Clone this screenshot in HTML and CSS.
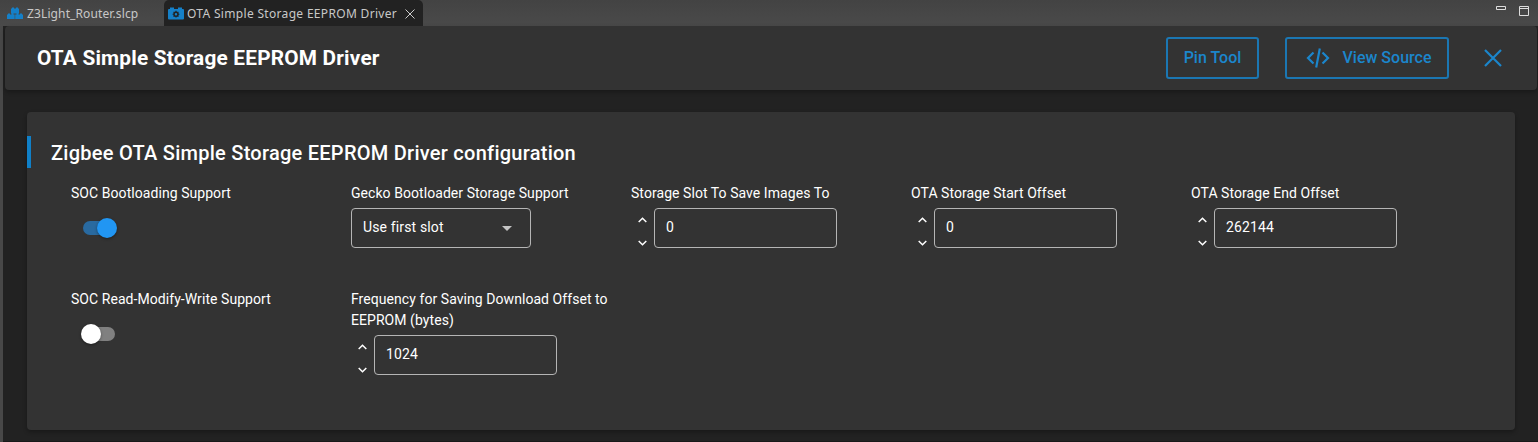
FILE: index.html
```html
<!DOCTYPE html>
<html lang="en">
<head>
<meta charset="utf-8">
<title>OTA Simple Storage EEPROM Driver</title>
<link rel="stylesheet" href="styles.css">
</head>
<body>
<nav class="tabs">
  <div class="tab tab-first">
    <svg class="tab-icon" width="16" height="13" viewBox="0 0 16 13" fill="#1580c8"><path d="M4 1.500h1V.5h2v1h2v-1h2v1h1v5H4zM0 7.500h1v-1h2v1h1.500v-1h2v1h1.200V12H0zM8.200 7.500h1.300v-1h2v1H13v-1h2v1h1V12H8.200z"/></svg>
    <span class="tab-name">Z3Light_Router.slcp</span>
  </div>
  <div class="tab tab-active">
    <svg class="tab-icon" width="16" height="13" viewBox="0 0 16 13"><path fill="#1580c8" d="M1 2h1V.5h4V2h4V.5h4V2h1q1 0 1 1v8.500q0 1-1 1H1q-1 0-1-1V3q0-1 1-1z"/><circle cx="8" cy="7.200" r="2" fill="none" stroke="#222" stroke-width="1.500"/><path stroke="#222" stroke-width="1.100" d="M8 3.800v1.200M8 9.400v1.200M4.600 7.200h1.200M10.200 7.200h1.200M5.600 4.800l.8.8M9.600 8.800l.8.8M10.400 4.800l-.8.8M6.400 8.800l-.8.8"/></svg>
    <span class="tab-name">OTA Simple Storage EEPROM Driver</span>
    <svg class="tab-close" width="10" height="10" viewBox="0 0 10 10" fill="none" stroke="#ccc" stroke-width="1"><path d="M.5.5l9 9M9.500.5l-9 9"/></svg>
  </div>
  <div class="window-tools">
    <svg width="10" height="4" viewBox="0 0 10 4" fill="none" stroke="#ddd"><path d="M.5.5h9v3h-9z"/></svg>
    <svg width="10" height="10" viewBox="0 0 10 10" fill="none" stroke="#ddd"><path d="M.5.5h9v9h-9zM.5 2.500h9"/></svg>
  </div>
</nav>
<main class="editor">
  <header class="header">
    <h1 class="title">OTA Simple Storage EEPROM Driver</h1>
    <button class="button pin">Pin Tool</button>
    <button class="button source">
      <svg width="24" height="20" viewBox="0 0 24 20" fill="none" stroke="#1b86cc" stroke-width="2.200"><path d="M7.500 4.500L2 10l5.500 5.500M16.500 4.500L22 10l-5.500 5.500M13.800.5l-3.600 19"/></svg>
      <span>View Source</span>
    </button>
    <svg class="close" width="18" height="18" viewBox="0 0 18 18" fill="none" stroke="#1b86cc" stroke-width="2.200"><path d="M1 1l16 16M17 1L1 17"/></svg>
  </header>
  <section class="panel">
    <h2 class="section-title">Zigbee OTA Simple Storage EEPROM Driver configuration</h2>
    <div class="grid">
      <div class="field">
        <div class="label">SOC Bootloading Support</div>
        <div class="switch on"><span class="knob"></span></div>
      </div>
      <div class="field">
        <div class="label">Gecko Bootloader Storage Support</div>
        <div class="box select"><span>Use first slot</span><svg width="10" height="5" viewBox="0 0 10 5" fill="#c4c4c4"><path d="M0 0h10L5 5z"/></svg></div>
      </div>
      <div class="field">
        <div class="label">Storage Slot To Save Images To</div>
        <div class="number">
          <svg width="9" height="29" viewBox="0 0 9 29" fill="none" stroke="#fff" stroke-width="1.500"><path d="M.7 5L4.500 1.200 8.300 5M.7 24L4.500 27.800 8.300 24"/></svg>
          <div class="box">0</div>
        </div>
      </div>
      <div class="field">
        <div class="label">OTA Storage Start Offset</div>
        <div class="number">
          <svg width="9" height="29" viewBox="0 0 9 29" fill="none" stroke="#fff" stroke-width="1.500"><path d="M.7 5L4.500 1.200 8.300 5M.7 24L4.500 27.800 8.300 24"/></svg>
          <div class="box">0</div>
        </div>
      </div>
      <div class="field">
        <div class="label">OTA Storage End Offset</div>
        <div class="number">
          <svg width="9" height="29" viewBox="0 0 9 29" fill="none" stroke="#fff" stroke-width="1.500"><path d="M.7 5L4.500 1.200 8.300 5M.7 24L4.500 27.800 8.300 24"/></svg>
          <div class="box">262144</div>
        </div>
      </div>
      <div class="field">
        <div class="label">SOC Read-Modify-Write Support</div>
        <div class="switch"><span class="knob"></span></div>
      </div>
      <div class="field">
        <div class="label">Frequency for Saving Download Offset to EEPROM (bytes)</div>
        <div class="number">
          <svg width="9" height="29" viewBox="0 0 9 29" fill="none" stroke="#fff" stroke-width="1.500"><path d="M.7 5L4.500 1.200 8.300 5M.7 24L4.500 27.800 8.300 24"/></svg>
          <div class="box">1024</div>
        </div>
      </div>
    </div>
  </section>
</main>
</body>
</html>
```
FILE: styles.css
```css
* { box-sizing: border-box; }
body {
  margin: 0;
  height: 442px;
  overflow: hidden;
  background: #484848;
  color: #fff;
  font-family: Roboto, sans-serif;
}
svg { display: block; flex: none; }
.tabs {
  display: flex;
  height: 26px;
  background: linear-gradient(#434343, #4a4a4a);
  font: 12px/26px "Noto Sans", sans-serif;
  color: #c8c8c8;
}
.tab { display: flex; align-items: center; padding-top: 1px; white-space: nowrap; }
.tab-first { width: 164px; padding-left: 7px; gap: 4px; letter-spacing: .12px; }
.tab-active {
  width: 259px;
  padding-left: 4px;
  gap: 3px;
  background: #222;
  border-radius: 5px 5px 0 0;
  letter-spacing: .32px;
}
.tab-icon { margin-bottom: 1px; }
.tab-close { margin-left: 5px; }
.window-tools { display: flex; gap: 13px; margin-left: auto; padding: 6px 9px 0 0; }
.editor {
  height: 416px;
  margin-left: 3px;
  padding: 0 1px 0 2px;
  background: #222;
  border-bottom: 1px solid #191919;
}
.header {
  display: flex;
  align-items: center;
  height: 64px;
  padding: 0 35px 0 32px;
  background: #333;
  border-radius: 4px;
  box-shadow: 0 2px 4px rgba(0, 0, 0, .3);
}
.title {
  margin: 0 auto 0 0;
  font-size: 20.8px;
  font-weight: 700;
  line-height: 28px;
  letter-spacing: .2px;
}
.button {
  display: flex;
  align-items: center;
  justify-content: center;
  height: 42px;
  padding: 0;
  border: 2px solid #1b77b3;
  border-radius: 3px;
  background: transparent;
  color: #1b86cc;
  font: 500 16px/24px Roboto, sans-serif;
}
.pin { width: 93px; }
.source { width: 164px; margin: 0 35px 0 26px; padding-left: 3px; gap: 13px; }
.panel {
  height: 318px;
  margin: 22px 22px 0;
  padding-top: 24px;
  background: #333;
  border-radius: 4px;
  box-shadow: 0 2px 4px rgba(0, 0, 0, .3);
}
.section-title {
  margin: 0;
  height: 32px;
  padding-left: 20px;
  border-left: 4px solid #1080c8;
  font-size: 20px;
  font-weight: 500;
  line-height: 34px;
  letter-spacing: .26px;
}
.grid {
  display: grid;
  grid-template-columns: repeat(5, 280px);
  grid-template-rows: 106px auto;
  padding: 15px 0 0 44px;
}
.label {
  width: 270px;
  margin-bottom: 4px;
  font-size: 14px;
  line-height: 21px;
  letter-spacing: .06px;
}
.box {
  display: flex;
  align-items: center;
  width: 183px;
  height: 40px;
  padding: 0 11px 2px;
  border: 1px solid #b5b5b5;
  border-radius: 4px;
  font-size: 14px;
  letter-spacing: .14px;
}
.select { width: 180px; justify-content: space-between; padding-right: 18px; }
.select svg { margin-top: 3px; }
.number { display: flex; align-items: center; gap: 7px; padding-left: 7px; }
.number svg { margin-top: 6px; }
.switch {
  display: flex;
  align-items: center;
  width: 32px;
  height: 14px;
  margin: 17px 0 0 12px;
  border-radius: 7px;
  background: #808080;
}
.knob {
  flex: none;
  width: 20px;
  height: 20px;
  margin-left: -2px;
  border-radius: 50%;
  background: #fff;
  box-shadow: 0 1px 3px rgba(0, 0, 0, .4);
}
.on { background: #296aa0; }
.on .knob { margin-left: 14px; background: #2196f3; }
```
